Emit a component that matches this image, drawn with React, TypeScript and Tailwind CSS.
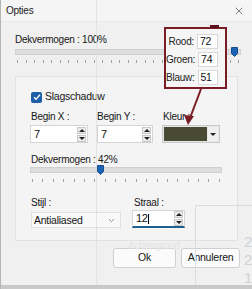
import React from 'react';
import { X, ChevronDown } from 'lucide-react';

const font = { fontFamily: '"Liberation Sans", Arial, sans-serif' };

const Ticks: React.FC<{ count: number; mt: string }> = ({ count, mt }) => (
  <div className={`flex justify-between px-[2px] ${mt}`}>
    {Array.from({ length: count }).map((_, i) => (
      <span key={i} className="w-px h-[3px] bg-[#a0a0a0]" />
    ))}
  </div>
);

const Thumb = () => (
  <svg width="7" height="10" viewBox="0 0 7 10" className="block">
    <path d="M0.5 0.5h6v6l-3 3l-3-3z" fill="#1b63b5" stroke="#164f91" />
  </svg>
);

const Spinner = () => (
  <div className="flex flex-col gap-px pr-[1px]">
    <span className="w-[9px] h-[7px] bg-[#ececec] border border-[#c8c8c8] flex items-center justify-center">
      <span className="border-x-[3px] border-x-transparent border-b-[3px] border-b-[#222]" />
    </span>
    <span className="w-[9px] h-[7px] bg-[#ececec] border border-[#c8c8c8] flex items-center justify-center">
      <span className="border-x-[3px] border-x-transparent border-t-[3px] border-t-[#222]" />
    </span>
  </div>
);

const SpinInput: React.FC<{ value: string; width: string; underline?: boolean }> = ({ value, width, underline }) => (
  <div
    className={`${width} h-[18px] bg-white border border-[#d5d5d5] flex items-center justify-between pl-[3px] ${
      underline ? 'border-b-2 border-b-[#1f5f8f]' : ''
    }`}
  >
    <span className="text-[11px] leading-none text-[#111]">
      {value}
      {underline ? <span className="inline-block w-px h-[10px] bg-black align-middle" /> : null}
    </span>
    <Spinner />
  </div>
);

const ColorRow: React.FC<{ label: string; value: string }> = ({ label, value }) => (
  <div className="flex items-center justify-end gap-[3px] h-[15px]">
    <span className="text-[10px] text-[#222]">{label}</span>
    <div className="w-[21px] h-[15px] bg-white border border-[#d8d8d8] flex items-center pl-[2px] text-[10.5px] text-[#111]">
      {value}
    </div>
  </div>
);

export default function App() {
  return (
    <div
      className="relative w-[252px] h-[289px] overflow-hidden bg-[#f0f0f0] text-[#161616] text-[10px] tracking-[-0.25px] border-l border-[#b5b5b5]"
      style={font}
    >
      {/* title bar */}
      <div className="h-[22px] bg-[#f5f5f5] flex items-center justify-between pl-[5px] pr-[7px] border-b border-[#e6e6e6]">
        <span className="text-[10px] text-[#222]">Opties</span>
        <X size={12} strokeWidth={1.2} className="text-[#333]" />
      </div>

      <div className="pl-[14px] pr-[11px] pt-[12px]">
        <p className="leading-[12px]">Dekvermogen : 100%</p>
        <div className="relative mt-[3px]">
          <div className="h-[6px] bg-[#dedede] border border-[#d0d0d0]" />
          <div className="absolute right-[3px] top-[-2px]"><Thumb /></div>
          <Ticks count={27} mt="mt-[5px]" />
        </div>

        {/* group */}
        <div className="mt-[13px] mr-[3px] h-[165px] bg-[#f4f4f4] border border-[#e2e2e2] pl-[15px] pr-[14px] pt-[14px]">
          <div className="flex items-center gap-[3px] h-[12px]">
            <span className="w-[11px] h-[11px] rounded-[2px] bg-[#1c5fa8] flex items-center justify-center">
              <svg width="8" height="8" viewBox="0 0 8 8"><path d="M1 4.2l2 2l4-4.5" stroke="#fff" strokeWidth="1.3" fill="none" /></svg>
            </span>
            <span className="text-[10.5px]">Slagschaduw</span>
          </div>

          <div className="flex mt-[8px]">
            <div className="flex flex-col gap-[2px] w-[66px]">
              <span className="leading-[12px]">Begin X :</span>
              <SpinInput value="7" width="w-[58px] -ml-[1px]" />
            </div>
            <div className="flex flex-col gap-[2px] w-[65px]">
              <span className="leading-[12px]">Begin Y :</span>
              <SpinInput value="7" width="w-[56px]" />
            </div>
            <div className="flex flex-col gap-[2px]">
              <span className="leading-[12px] pl-[1px]">Kleur :</span>
              <div className="flex h-[18px] border border-[#c8c8c8] bg-[#e8e8e8] p-[1px] gap-[1px] w-[58px]">
                <span className="flex-1 bg-[#484a33]" />
                <span className="w-[10px] bg-[#f0f0f0] flex items-center justify-center">
                  <span className="border-x-[3px] border-x-transparent border-t-[3px] border-t-[#222]" />
                </span>
              </div>
            </div>
          </div>

          <p className="leading-[12px] mt-[11px]">Dekvermogen : 42%</p>
          <div className="relative mt-[1px] w-[192px] -ml-[1px]">
            <div className="h-[6px] bg-[#dedede] border border-[#d0d0d0]" />
            <div className="absolute left-[67px] top-[-2px]"><Thumb /></div>
            <Ticks count={19} mt="mt-[6px]" />
          </div>

          <div className="flex mt-[15px] gap-[11px]">
            <div className="flex flex-col gap-[3px]">
              <span className="leading-[12px]">Stijl :</span>
              <div className="w-[90px] h-[16px] bg-[#f8f8f8] border border-[#e0e0e0] flex items-center justify-between pl-[2px] pr-[4px]">
                <span className="text-[10.5px] leading-none">Antialiased</span>
                <ChevronDown size={9} className="text-[#777]" />
              </div>
            </div>
            <div className="flex flex-col gap-[1px]">
              <span className="leading-[12px] pl-[2px]">Straal :</span>
              <SpinInput value="12" width="w-[53px]" underline />
            </div>
          </div>
        </div>

        <div className="flex justify-end gap-[5px] mt-[7px] pr-[1px]">
          <button className="w-[63px] h-[20px] bg-[#fbfbfb] border border-[#d0d0d0] rounded-[3px] text-[10.5px]">Ok</button>
          <button className="w-[59px] h-[20px] bg-[#fbfbfb] border border-[#d0d0d0] rounded-[3px] text-[10.5px]">Annuleren</button>
        </div>
      </div>

      {/* ghost of overlapping screenshot */}
      <div className="absolute left-[95px] top-0 w-px h-[289px] bg-[#dcdcdc]/70" />
      <div className="absolute left-[194px] top-[205px] w-[60px] h-[84px] border-l border-t border-[#dcdcdc]" />
      <div className="absolute left-[243px] top-[233px] flex flex-col text-[15px] leading-[18px] text-[#d2d2d2]">
        <span>2</span>
        <span>2</span>
        <span>1</span>
      </div>
      <span className="absolute left-[127px] top-[238px] text-[10px] text-[#e4e4e4]">Achtergrond</span>
      <div className="absolute left-0 bottom-0 w-[252px] h-[4px] bg-[#c9c9c9]" />

      {/* callout */}
      <div className="absolute left-[163px] top-[27px] w-[63px] h-[62px] border-2 border-[#7a1c25] bg-[#f5f5f5] flex flex-col gap-[3px] pt-[5px] pr-[7px]">
        <ColorRow label="Rood:" value="72" />
        <ColorRow label="Groen:" value="74" />
        <ColorRow label="Blauw:" value="51" />
      </div>
      <div className="absolute left-[209px] top-[25px] w-[9px] h-[3px] bg-[#5a1018]" />
      <svg className="absolute left-0 top-0" width="252" height="289">
        <line x1="200" y1="89" x2="189" y2="118" stroke="#7a1c25" strokeWidth="2" />
        <path d="M183 115l4 10l6-9z" fill="#7a1c25" />
      </svg>
    </div>
  );
}
